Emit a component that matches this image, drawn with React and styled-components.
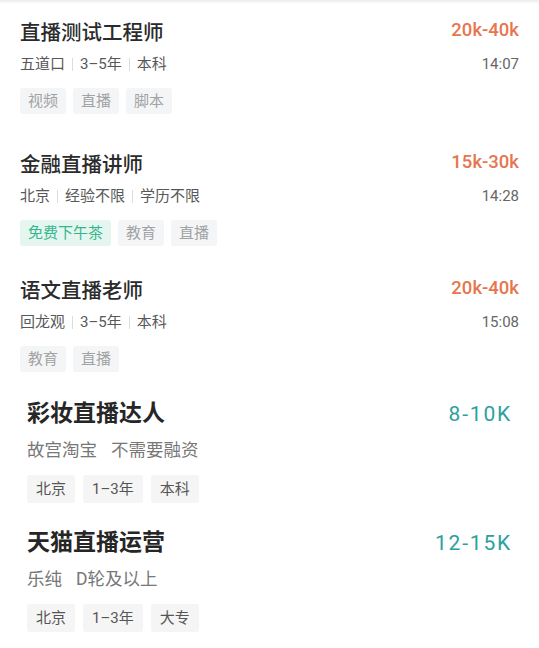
import React from "react";
import styled, { createGlobalStyle } from "styled-components";

const Global = createGlobalStyle`
  html, body { margin: 0; padding: 0; background: #ffffff; }
  body {
    font-family: Roboto, "Noto Sans CJK SC", "Noto Sans", sans-serif;
    -webkit-font-smoothing: antialiased;
  }
`;

const Page = styled.div`
  width: 539px;
  min-height: 648px;
  background: #fff;
  display: flex;
  flex-direction: column;
`;

const TopShade = styled.div`
  height: 4px;
  background: linear-gradient(#ececec, #ffffff);
`;

/* ---------- style A : job cards with time ---------- */
const JobCard = styled.div`
  display: flex;
  flex-direction: column;
  padding: 0 20px;
  margin-top: ${(p) => p.$top}px;
`;

const HeadRow = styled.div`
  display: flex;
  justify-content: space-between;
  align-items: flex-start;
`;

const JobTitle = styled.div`
  font-size: 20.5px;
  line-height: 28px;
  font-weight: 500;
  color: #2b2b2b;
`;

const Salary = styled.div`
  font-family: Roboto, sans-serif;
  font-size: 18.5px;
  line-height: 22px;
  font-weight: 500;
  color: #e6764f;
`;

const MetaRow = styled.div`
  display: flex;
  justify-content: space-between;
  align-items: center;
  margin-top: 7px;
  height: 20px;
`;

const Meta = styled.div`
  display: flex;
  align-items: center;
  font-size: 15px;
  line-height: 20px;
  color: #585858;
`;

const Sep = styled.span`
  display: inline-block;
  width: 1px;
  height: 13px;
  background: #dcdcdc;
  margin: 0 7px;
`;

const Time = styled.div`
  font-family: Roboto, sans-serif;
  font-size: 15px;
  line-height: 20px;
  color: #666;
`;

const TagRow = styled.div`
  display: flex;
  gap: 7px;
  margin-top: 14px;
`;

const Tag = styled.span`
  height: 26px;
  line-height: 26px;
  padding: 0 8px;
  border-radius: 3px;
  font-size: 15px;
  background: ${(p) => (p.$green ? "#e5f6f0" : "#f4f5f7")};
  color: ${(p) => (p.$green ? "#34b68c" : "#a2a2a2")};
`;

/* ---------- style B : company cards ---------- */
const CoCard = styled.div`
  display: flex;
  flex-direction: column;
  padding: 0 27px;
  margin-top: ${(p) => p.$top}px;
`;

const CoHead = styled.div`
  display: flex;
  justify-content: space-between;
  align-items: center;
`;

const CoTitle = styled.div`
  font-size: 23px;
  line-height: 30px;
  font-weight: 700;
  color: #262626;
`;

const CoSalary = styled.div`
  font-family: Roboto, sans-serif;
  font-size: 21px;
  line-height: 30px;
  letter-spacing: 1.8px;
  color: #2aa19e;
`;

const CoSub = styled.div`
  display: flex;
  gap: 14px;
  margin-top: 9px;
  font-size: 17.5px;
  line-height: 24px;
  color: #777;
`;

const CoTagRow = styled.div`
  display: flex;
  gap: 8px;
  margin-top: 13px;
`;

const CoTag = styled.span`
  height: 28px;
  line-height: 28px;
  padding: 0 9px;
  border-radius: 3px;
  font-size: 15px;
  background: #f5f5f5;
  color: #555;
`;

const jobs = [
  {
    top: 15,
    title: "直播测试工程师",
    salary: "20k-40k",
    meta: ["五道口", "3–5年", "本科"],
    time: "14:07",
    tags: [{ t: "视频" }, { t: "直播" }, { t: "脚本" }],
  },
  {
    top: 37,
    title: "金融直播讲师",
    salary: "15k-30k",
    meta: ["北京", "经验不限", "学历不限"],
    time: "14:28",
    tags: [{ t: "免费下午茶", g: true }, { t: "教育" }, { t: "直播" }],
  },
  {
    top: 31,
    title: "语文直播老师",
    salary: "20k-40k",
    meta: ["回龙观", "3–5年", "本科"],
    time: "15:08",
    tags: [{ t: "教育" }, { t: "直播" }],
  },
];

const companies = [
  {
    top: 27,
    title: "彩妆直播达人",
    salary: "8-10K",
    sub: ["故宫淘宝", "不需要融资"],
    tags: ["北京", "1–3年", "本科"],
  },
  {
    top: 25,
    title: "天猫直播运营",
    salary: "12-15K",
    sub: ["乐纯", "D轮及以上"],
    tags: ["北京", "1–3年", "大专"],
  },
];

export default function App() {
  return (
    <Page>
      <Global />
      <TopShade />
      {jobs.map((j) => (
        <JobCard key={j.title} $top={j.top}>
          <HeadRow>
            <JobTitle>{j.title}</JobTitle>
            <Salary>{j.salary}</Salary>
          </HeadRow>
          <MetaRow>
            <Meta>
              {j.meta.map((m, i) => (
                <React.Fragment key={m}>
                  {i > 0 && <Sep />}
                  <span>{m}</span>
                </React.Fragment>
              ))}
            </Meta>
            <Time>{j.time}</Time>
          </MetaRow>
          <TagRow>
            {j.tags.map((t) => (
              <Tag key={t.t} $green={t.g}>
                {t.t}
              </Tag>
            ))}
          </TagRow>
        </JobCard>
      ))}
      {companies.map((c) => (
        <CoCard key={c.title} $top={c.top}>
          <CoHead>
            <CoTitle>{c.title}</CoTitle>
            <CoSalary>{c.salary}</CoSalary>
          </CoHead>
          <CoSub>
            {c.sub.map((s) => (
              <span key={s}>{s}</span>
            ))}
          </CoSub>
          <CoTagRow>
            {c.tags.map((t) => (
              <CoTag key={t}>{t}</CoTag>
            ))}
          </CoTagRow>
        </CoCard>
      ))}
    </Page>
  );
}
